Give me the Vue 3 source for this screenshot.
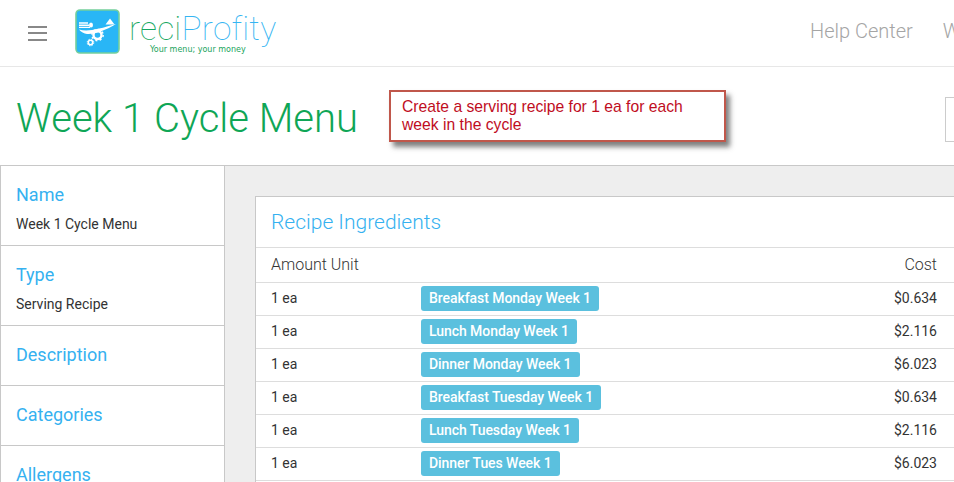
<script setup>
const sections = [
  { label: 'Name', value: 'Week 1 Cycle Menu' },
  { label: 'Type', value: 'Serving Recipe' },
  { label: 'Description' },
  { label: 'Categories' },
  { label: 'Allergens' },
]
const rows = [
  { amount: '1 ea', name: 'Breakfast Monday Week 1', cost: '$0.634' },
  { amount: '1 ea', name: 'Lunch Monday Week 1', cost: '$2.116' },
  { amount: '1 ea', name: 'Dinner Monday Week 1', cost: '$6.023' },
  { amount: '1 ea', name: 'Breakfast Tuesday Week 1', cost: '$0.634' },
  { amount: '1 ea', name: 'Lunch Tuesday Week 1', cost: '$2.116' },
  { amount: '1 ea', name: 'Dinner Tues Week 1', cost: '$6.023' },
]
</script>

<template>
  <div class="page">
    <header class="topbar">
      <button class="burger" aria-label="Menu"><span></span><span></span><span></span></button>
      <div class="logo">
        <svg class="logo-mark" width="45" height="45" viewBox="0 0 45 45">
          <rect x="1" y="1" width="43" height="43" rx="4" fill="#29b6f6" stroke="#74cf9c" stroke-width="1.6" />
          <path d="M4 20.5 C13 23 24 20 41 15 C30 21.5 20 25.5 12 25 C9 24.8 6 23 4 20.5 Z" fill="#fff" />
          <path d="M30.5 15.5 L35 9.5 L39.5 15.5 Z" fill="#fff" />
          <g fill="none" stroke="#fff" stroke-width="1.4">
            <path d="M4 14 H13 M4 16.2 H14 M4 18.4 H15" />
          </g>
          <ellipse cx="16" cy="16" rx="2" ry="2.6" fill="#fff" />
          <circle cx="22.5" cy="26" r="4" fill="none" stroke="#fff" stroke-width="2.4" />
          <circle cx="22.5" cy="26" r="5.7" fill="none" stroke="#fff" stroke-width="1.4" stroke-dasharray="2 2.47" />
          <circle cx="15.5" cy="33.5" r="2.2" fill="none" stroke="#fff" stroke-width="1.6" />
          <circle cx="15.5" cy="33.5" r="3.3" fill="none" stroke="#fff" stroke-width="1" stroke-dasharray="1.4 1.2" />
        </svg>
        <div class="logo-text">
          <div class="wordmark"><span class="reci">reci</span><span class="profity">Profity</span></div>
          <div class="tagline">Your menu; your money</div>
        </div>
      </div>
      <nav class="nav">
        <a>Help Center</a>
        <a>What's New</a>
      </nav>
    </header>

    <section class="titlebar">
      <h1>Week 1 Cycle Menu</h1>
      <div class="search"></div>
      <div class="callout">Create a serving recipe for 1 ea for each week in the cycle</div>
    </section>

    <div class="main">
      <aside class="sidebar">
        <div v-for="s in sections" :key="s.label" class="side-item" :class="{ filled: s.value }">
          <div class="side-label">{{ s.label }}</div>
          <div v-if="s.value" class="side-value">{{ s.value }}</div>
        </div>
      </aside>
      <div class="content">
        <div class="card">
          <div class="card-title">Recipe Ingredients</div>
          <div class="row head">
            <span class="amount">Amount Unit</span>
            <span class="cost">Cost</span>
          </div>
          <div v-for="r in rows" :key="r.name" class="row">
            <span class="amount">{{ r.amount }}</span>
            <span class="tag">{{ r.name }}</span>
            <span class="cost">{{ r.cost }}</span>
          </div>
        </div>
      </div>
    </div>
  </div>
</template>

<style>
html, body { margin: 0; overflow: hidden; background: #fff; }
</style>

<style scoped>
.page {
  width: 954px;
  height: 482px;
  overflow: hidden;
  position: relative;
  font-family: Roboto, "Liberation Sans", sans-serif;
  color: #333;
  background: #fff;
}
.topbar {
  height: 66px;
  border-bottom: 1px solid #e7e7e7;
  display: flex;
  align-items: center;
  padding-left: 28px;
  white-space: nowrap;
}
.burger {
  width: 19px;
  height: 15px;
  padding: 0;
  border: 0;
  background: none;
  display: flex;
  flex-direction: column;
  justify-content: space-between;
}
.burger span { display: block; height: 2px; background: #888; }
.logo { display: flex; align-items: center; margin-left: 28px; margin-top: -3px; }
.logo-mark { display: block; }
.logo-text { margin-left: 9px; margin-top: 3px; width: 150px; }
.wordmark { font-size: 33.5px; line-height: 32px; font-weight: 100; letter-spacing: 0.2px; }
.reci { color: #17a862; }
.profity { color: #35b5f2; }
.tagline { font-family: "DejaVu Sans", sans-serif; font-size: 8px; line-height: 9px; color: #21a35c; margin-left: 21px; }
.nav { position: absolute; left: 810px; top: 20px; display: flex; gap: 30px; font-size: 20px; font-weight: 300; line-height: 23px; color: #a5a5a5; }

.titlebar { height: 98px; position: relative; }
h1 {
  margin: 0;
  padding: 29px 0 0 16px;
  font-size: 40px;
  line-height: 46px;
  font-weight: 300;
  color: #0fa656;
  white-space: nowrap;
}
.search {
  position: absolute;
  left: 945px;
  top: 30px;
  width: 40px;
  height: 45px;
  box-sizing: border-box;
  border: 1px solid #ccc;
}
.callout {
  position: absolute;
  left: 389px;
  top: 23px;
  width: 337px;
  height: 52px;
  box-sizing: border-box;
  padding: 6px 11px;
  border: 2px solid #c0574b;
  background: #fff;
  color: #c00d1e;
  font-family: "Liberation Sans", Arial, sans-serif;
  font-size: 15.7px;
  line-height: 18px;
  box-shadow: 4px 5px 5px rgba(60, 60, 60, .65);
  z-index: 1;
}

.main { display: flex; height: 317px; border-top: 1px solid #c8c8c8; }
.sidebar {
  width: 225px;
  flex: none;
  box-sizing: border-box;
  border-left: 1px solid #c8c8c8;
  border-right: 1px solid #c8c8c8;
  background: #fff;
}
.side-item { border-bottom: 1px solid #c8c8c8; padding: 18px 0 0 15px; height: 41px; }
.side-item.filled { height: 61px; }
.side-label { font-size: 18px; line-height: 22px; color: #35b1f0; }
.side-value { font-size: 14px; line-height: 18px; margin-top: 9px; color: #333; }

.content { flex: 1; background: #eee; padding: 30px 0 0 30px; min-width: 0; }
.card {
  width: 760px;
  height: 300px;
  box-sizing: border-box;
  border: 1px solid #c8c8c8;
  background: #fff;
}
.card-title { height: 51px; box-sizing: border-box; padding: 13px 15px 0; font-size: 21px; line-height: 24px; font-weight: 300; color: #35b1f0; border-bottom: 1px solid #ddd; }
.row {
  display: flex;
  align-items: center;
  height: 33px;
  box-sizing: border-box;
  width: 698px;
  padding: 0 17px 2px 15px;
  border-bottom: 1px solid #ddd;
  font-size: 14px;
  color: #333;
}
.row.head { height: 35px; font-size: 16px; font-weight: 300; }
.amount { width: 150px; flex: none; }
.tag {
  background: #5bc0de;
  color: #fff;
  font-weight: 500;
  letter-spacing: -0.06px;
  border-radius: 3px;
  height: 25px;
  line-height: 25px;
  padding: 0 8px;
}
.cost { margin-left: auto; }
</style>
